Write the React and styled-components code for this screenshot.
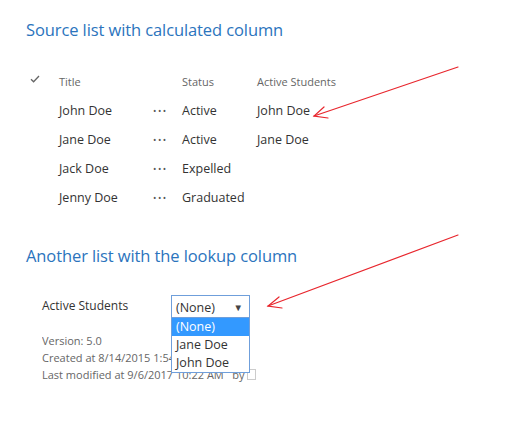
import styled, { createGlobalStyle } from 'styled-components';

const GlobalStyle = createGlobalStyle`
  html, body {
    margin: 0;
    padding: 0;
    background: #fff;
  }
  body {
    font-family: "Open Sans", "Noto Sans", sans-serif;
    color: #333;
  }
`;

const students = [
  { title: 'John Doe', status: 'Active', active: 'John Doe' },
  { title: 'Jane Doe', status: 'Active', active: 'Jane Doe' },
  { title: 'Jack Doe', status: 'Expelled', active: '' },
  { title: 'Jenny Doe', status: 'Graduated', active: '' },
];

const options = ['(None)', 'Jane Doe', 'John Doe'];

const App = () => {
  return (
    <>
      <GlobalStyle />
      <Page>
        <Heading $top={17}>Source list with calculated column</Heading>
        <Table>
          <HeadCell>
            <CheckMark viewBox="0 0 10 8">
              <path d="M1 4.2 L3.6 6.8 L9 1" />
            </CheckMark>
          </HeadCell>
          <HeadCell>Title</HeadCell>
          <HeadCell />
          <HeadCell>Status</HeadCell>
          <HeadCell>Active Students</HeadCell>
          {students.map((s) => (
            <Row key={s.title}>
              <Cell />
              <Cell>{s.title}</Cell>
              <Cell><Dots>&bull;&bull;&bull;</Dots></Cell>
              <Cell>{s.status}</Cell>
              <Cell>{s.active}</Cell>
            </Row>
          ))}
        </Table>

        <Heading $top={31}>Another list with the lookup column</Heading>
        <Form>
          <FieldRow>
            <Label>Active Students</Label>
            <SelectWrap>
              <SelectBox>
                <span>(None)</span>
                <Caret>&#9660;</Caret>
              </SelectBox>
              <OptionList>
                {options.map((o, i) => (
                  <Option key={o} $selected={i === 0}>{o}</Option>
                ))}
              </OptionList>
            </SelectWrap>
          </FieldRow>
          <Meta>
            <MetaLine>Version: 5.0</MetaLine>
            <MetaLine>Created at 8/14/2015 1:54 PM&nbsp;&nbsp; by <Presence /></MetaLine>
            <MetaLine>Last modified at 9/6/2017 10:22 AM&nbsp;&nbsp; by <Presence /></MetaLine>
          </Meta>
        </Form>

        <Arrows viewBox="0 0 528 429">
          <g stroke="#e8262d" strokeWidth="1.2" fill="none" strokeLinecap="round">
            <path d="M458 67 L314 116" />
            <path d="M324 107 L314 116 L328 118" />
            <path d="M458 235 L268 306" />
            <path d="M279 297 L268 306 L282 308" />
          </g>
        </Arrows>
      </Page>
    </>
  );
};

export default App;

const Page = styled.div`
  position: relative;
  width: 528px;
  height: 429px;
  padding-left: 26px;
  box-sizing: border-box;
  overflow: hidden;
`;

const Heading = styled.h2`
  margin: ${(p) => p.$top}px 0 0;
  font-size: 16.5px;
  font-weight: 400;
  line-height: 26px;
  color: #2b74bd;
  letter-spacing: -0.1px;
`;

const Table = styled.div`
  display: grid;
  grid-template-columns: 33px 94px 29px 75px auto;
  margin-top: 26px;
  width: 380px;
`;

const HeadCell = styled.div`
  height: 24px;
  margin-bottom: 3px;
  display: flex;
  align-items: center;
  font-size: 11px;
  color: #666;
`;

const Row = styled.div`
  display: contents;
`;

const Cell = styled.div`
  height: 29px;
  display: flex;
  align-items: center;
  font-size: 12.5px;
  color: #333;
`;

const CheckMark = styled.svg`
  width: 10px;
  height: 8px;
  margin-left: 4px;
  margin-bottom: 4px;
  fill: none;
  stroke: #666;
  stroke-width: 1.3;
`;

const Dots = styled.span`
  font-size: 9px;
  letter-spacing: 1.5px;
  color: #555;
`;

const Form = styled.div`
  padding-left: 16px;
  margin-top: 27px;
`;

const FieldRow = styled.div`
  display: flex;
  align-items: flex-start;
`;

const Label = styled.div`
  width: 129px;
  font-size: 12px;
  line-height: 20px;
  color: #333;
`;

const SelectWrap = styled.div`
  position: relative;
  margin-top: -1px;
`;

const SelectBox = styled.div`
  width: 79px;
  height: 23px;
  box-sizing: border-box;
  border: 1px solid #6f9fdb;
  display: flex;
  align-items: center;
  justify-content: space-between;
  padding: 1px 6px 0 4px;
  font-size: 12.5px;
  color: #333;
`;

const Caret = styled.span`
  font-size: 9.5px;
  color: #444;
`;

const OptionList = styled.div`
  position: absolute;
  top: 23px;
  left: 0;
  width: 79px;
  box-sizing: border-box;
  border: 1px solid #6f9fdb;
  border-top: none;
  background: #fff;
  z-index: 2;
`;

const Option = styled.div`
  height: 18px;
  line-height: 18px;
  padding-left: 4px;
  font-size: 12.5px;
  background: ${(p) => (p.$selected ? '#3399ff' : '#fff')};
  color: ${(p) => (p.$selected ? '#fff' : '#333')};
`;

const Meta = styled.div`
  margin-top: 14px;
  width: 216px;
  overflow: hidden;
  white-space: nowrap;
`;

const MetaLine = styled.div`
  font-size: 11px;
  line-height: 17px;
  color: #666;
`;

const Presence = styled.span`
  display: inline-block;
  width: 7px;
  height: 9px;
  border: 1px solid #ccc;
  vertical-align: -1px;
`;

const Arrows = styled.svg`
  position: absolute;
  left: 0;
  top: 0;
  width: 528px;
  height: 429px;
  pointer-events: none;
`;
